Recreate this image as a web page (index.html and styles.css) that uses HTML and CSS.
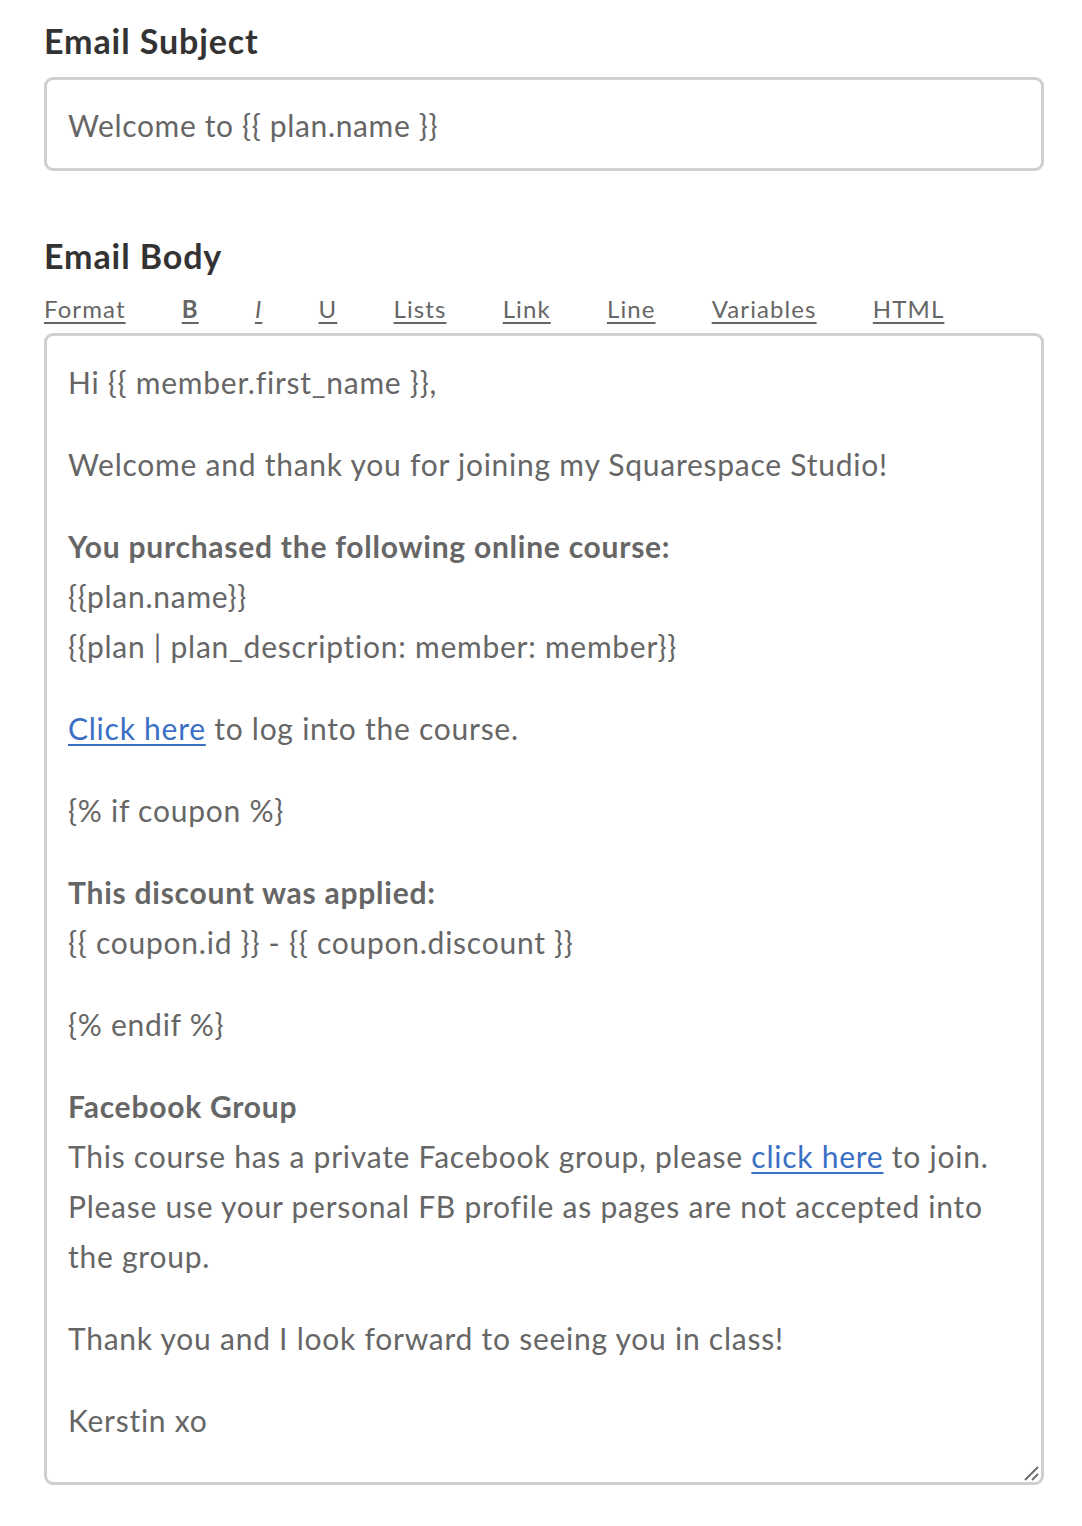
FILE: index.html
```html
<!DOCTYPE html>
<html lang="en">
<head>
<meta charset="utf-8">
<title>Email</title>
<link rel="stylesheet" href="styles.css">
</head>
<body>
<div class="page">
  <h2 class="label">Email Subject</h2>
  <div class="input">Welcome to {{ plan.name }}</div>

  <h2 class="label label-body">Email Body</h2>
  <nav class="toolbar">
    <a href="#">Format</a>
    <a href="#" class="tb-b">B</a>
    <a href="#" class="tb-i">I</a>
    <a href="#">U</a>
    <a href="#">Lists</a>
    <a href="#">Link</a>
    <a href="#">Line</a>
    <a href="#">Variables</a>
    <a href="#">HTML</a>
  </nav>
  <div class="editor-wrap">
    <div class="editor" contenteditable="true">
      <p>Hi {{ member.first_name }},</p>
      <p>Welcome and thank you for joining my Squarespace Studio!</p>
      <p><strong>You purchased the following online course:</strong><br>{{plan.name}}<br>{{plan | plan_description: member: member}}</p>
      <p><a href="#">Click here</a> to log into the course.</p>
      <p>{% if coupon %}</p>
      <p><strong>This discount was applied:</strong><br>{{ coupon.id }} - {{ coupon.discount }}</p>
      <p>{% endif %}</p>
      <p><strong>Facebook Group</strong><br>This course has a private Facebook group, please <a href="#">click here</a> to join. Please use your personal FB profile as pages are not accepted into the group.</p>
      <p>Thank you and I look forward to seeing you in class!</p>
      <p>Kerstin xo</p>
    </div>
    <svg class="grip" viewBox="0 0 16 16" width="16" height="16" aria-hidden="true">
      <path d="M1 15 L14 2 M8 15 L14 9" stroke="#6a6a6a" stroke-width="1.8" fill="none" stroke-linecap="butt"/>
    </svg>
  </div>
</div>
</body>
</html>
```

FILE: styles.css
```css
html, body {
  margin: 0;
  padding: 0;
  background: #ffffff;
}

body {
  font-family: Lato, "Open Sans", Arial, sans-serif;
  color: #666666;
}

.page {
  width: 1000px;
  padding: 21px 0 0 44px;
}

.label {
  margin: 0;
  font-size: 34px;
  line-height: 40px;
  font-weight: 700;
  letter-spacing: 0.9px;
  color: #333333;
}

.input {
  margin-top: 16px;
  border: 3px solid #cfcfcf;
  border-radius: 9px;
  padding: 20px 21px 18px;
  font-size: 30px;
  line-height: 50px;
  letter-spacing: 0.65px;
  color: #666666;
}

.label-body {
  margin-top: 65px;
}

.toolbar {
  display: flex;
  gap: 56.2px;
  margin-top: 18px;
  font-size: 24px;
  line-height: 30px;
  letter-spacing: 1.1px;
}

.toolbar a {
  color: #666666;
  text-decoration: underline;
  text-underline-offset: 4px;
  text-decoration-thickness: 2px;
}

.toolbar .tb-b {
  font-weight: 700;
}

.toolbar .tb-i {
  font-style: italic;
}

.editor-wrap {
  position: relative;
  margin-top: 9px;
}

.editor {
  box-sizing: border-box;
  height: 1152px;
  border: 3px solid #cfcfcf;
  border-radius: 9px;
  padding: 21px 21px 36px;
  font-size: 30px;
  line-height: 50px;
  letter-spacing: 0.75px;
  color: #666666;
  overflow: hidden;
  outline: none;
}

.editor p {
  margin: 0 0 32px;
}

.editor p:last-child {
  margin-bottom: 0;
}

.editor strong {
  font-weight: 700;
}

.editor a {
  color: #3a6fc5;
  text-decoration: underline;
  text-decoration-thickness: 2px;
  text-underline-offset: 4px;
}

.grip {
  position: absolute;
  right: 4px;
  bottom: 4px;
  display: block;
}
```
